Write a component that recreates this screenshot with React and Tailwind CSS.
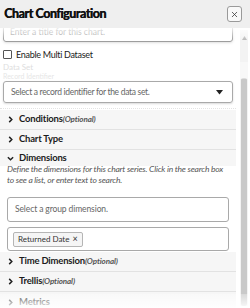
import { X } from "lucide-react";

const font = { fontFamily: "Lato, 'Open Sans', sans-serif" };

const Chevron = ({ open }) => (
  <svg width="7" height="7" viewBox="0 0 8 8" className="shrink-0">
    {open ? (
      <path d="M1 2.5 L4 5.5 L7 2.5" fill="none" stroke="#222" strokeWidth="1.7" />
    ) : (
      <path d="M2.5 1 L5.5 4 L2.5 7" fill="none" stroke="#222" strokeWidth="1.7" />
    )}
  </svg>
);

const Section = ({ title, optional, open, className = "h-[20px] border-b" }) => (
  <div className={`flex items-center gap-[5px] pl-[7px] bg-[#f6f6f6] border-[#e2e2e2] ${className}`}>
    <Chevron open={open} />
    <span className="text-[9.5px] font-bold tracking-[-0.2px] text-[#1c1c1c]">
      {title}
      {optional && <i className="font-bold text-[8px] tracking-[-0.1px] text-[#555]">(Optional)</i>}
    </span>
  </div>
);

const App = () => {
  return (
    <div className="w-[250px] h-[308px] bg-white relative overflow-hidden" style={font}>
      {/* header */}
      <div className="h-[28px] bg-[#efefef] flex items-center justify-between pl-[4px] pr-[8px] relative z-20">
        <h1 className="text-[12.5px] font-bold text-[#111] tracking-[-0.45px] [text-shadow:0.4px_0_0_#111]">Chart Configuration</h1>
        <button className="w-[15px] h-[16px] border border-[#9a9a9a] rounded-[3px] bg-white/60 flex items-center justify-center">
          <X size={9} strokeWidth={2} color="#333" />
        </button>
      </div>

      <div className="flex">
        {/* content */}
        <div className="w-[236px] flex flex-col">
          <div className="mt-[-6px] mx-[3px] h-[20px] border border-[#9d9d9d] rounded-[3px] shadow-sm flex items-center px-[6px]">
            <span className="text-[8.5px] text-[#999]">Enter a title for this chart.</span>
          </div>

          <label className="mt-[6px] ml-[3px] flex items-center gap-[4px] h-[13px]">
            <span className="w-[9px] h-[9px] border border-[#555] rounded-[1px] bg-white" />
            <span className="text-[9px] tracking-[-0.3px] text-[#1c1c1c]">Enable Multi Dataset</span>
          </label>

          <div className="mt-[2px] ml-[3px] text-[8px] leading-[9px] text-[#c8c8c8]">Data Set</div>
          <div className="ml-[3px] text-[7px] leading-[8px] text-[#d4d4d4]">Record Identifier</div>

          <div className="mt-[1px] mx-[3px] h-[22px] border border-[#a9a9a9] rounded-[3px] shadow-[0_1px_2px_rgba(0,0,0,0.15)] flex items-center justify-between pl-[7px] pr-[9px]">
            <span className="text-[8.5px] tracking-[-0.3px] text-[#666]">Select a record identifier for the data set.</span>
            <svg width="7" height="5" viewBox="0 0 7 5">
              <path d="M0 0 H7 L3.5 4.5 Z" fill="#222" />
            </svg>
          </div>

          <div className="mt-[5px] border-t border-dotted border-[#e3e3e3]" />

          <Section title="Conditions" optional className="mt-[1px] h-[20px] border-b" />
          <Section title="Chart Type" />
          <Section title="Dimensions" open className="h-[16px]" />

          <p className="mt-[-2px] pl-[7px] pr-[6px] text-[8.5px] leading-[11px] tracking-[-0.2px] italic text-[#555]">
            Define the dimensions for this chart series. Click in the search box to see a list, or enter text to search.
          </p>

          <div className="mt-[11px] mx-[7px] h-[25px] border border-[#a9a9a9] rounded-[3px] flex items-center px-[7px]">
            <span className="text-[8.5px] tracking-[-0.1px] text-[#666]">Select a group dimension.</span>
          </div>

          <div className="mt-[5px] mx-[7px] h-[24px] border border-[#a9a9a9] rounded-[3px] flex items-center px-[5px]">
            <span className="flex items-center gap-[3px] h-[15px] px-[4px] border border-[#b5b5b5] rounded-[2px] bg-[#f5f5f5] text-[8px] text-[#333]">
              Returned Date <span className="text-[9px]">×</span>
            </span>
          </div>

          <Section title="Time Dimension" optional className="mt-[1px] h-[20px] border-b" />
          <Section title="Trellis" optional />
          <Section title="Metrics" className="h-[20px]" />
        </div>

        {/* scrollbar */}
        <div className="ml-[4px] w-[8px] mt-[2px] h-[276px] bg-[#f3f3f3] flex flex-col items-center">
          <svg width="5" height="4" viewBox="0 0 5 4" className="mt-[6px]">
            <path d="M0 4 L2.5 0 L5 4 Z" fill="#bbb" />
          </svg>
          <div className="mt-[38px] w-[6px] flex-1 bg-[#c9c9c9] rounded-[2px]" />
        </div>
      </div>

      {/* fades */}
      <div className="absolute left-0 right-0 top-[28px] h-[12px] bg-gradient-to-b from-white/80 to-white/0 pointer-events-none z-10" />
      <div className="absolute left-0 right-0 top-[62px] h-[17px] bg-white/40 pointer-events-none z-10" />
      <div className="absolute left-0 right-0 bottom-0 h-[14px] bg-gradient-to-t from-white/90 to-white/30 pointer-events-none z-10" />
    </div>
  );
};

export default App;
